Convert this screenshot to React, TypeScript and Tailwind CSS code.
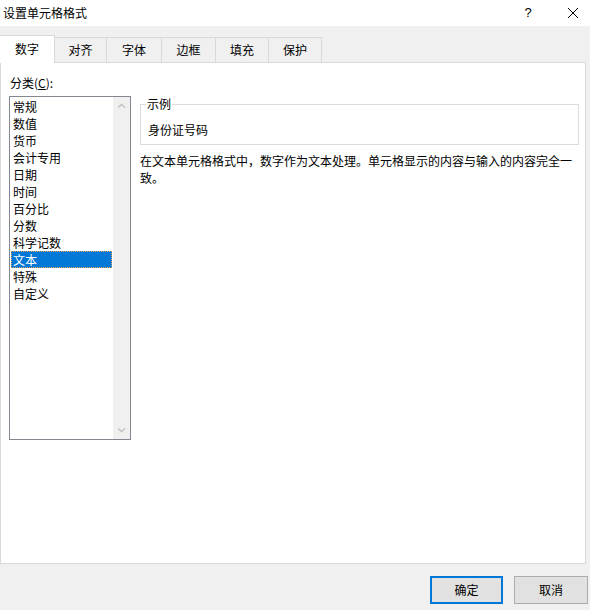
import { ReactNode } from 'react';

// Excel 的「设置单元格格式」对话框 —— 数字 选项卡

const tabs = [
  { label: '数字', width: 'w-[55px]' },
  { label: '对齐', width: 'w-[52px]' },
  { label: '字体', width: 'w-[55px]' },
  { label: '边框', width: 'w-[54px]' },
  { label: '填充', width: 'w-[53px]' },
  { label: '保护', width: 'w-[53px]' },
];

const categories = [
  '常规',
  '数值',
  '货币',
  '会计专用',
  '日期',
  '时间',
  '百分比',
  '分数',
  '科学记数',
  '文本',
  '特殊',
  '自定义',
];

const selected = '文本';

function Chevron({ down = false }: { down?: boolean }) {
  return (
    <svg width="9" height="6" viewBox="0 0 9 6" className="block">
      <path
        d={down ? 'M1 1.5 L4.5 4.5 L8 1.5' : 'M1 4.5 L4.5 1.5 L8 4.5'}
        fill="none"
        stroke="#c2c2c2"
        strokeWidth="1.6"
      />
    </svg>
  );
}

function DialogButton({ children, primary = false }: { children: ReactNode; primary?: boolean }) {
  return (
    <button
      className={
        primary
          ? 'w-[73px] h-[28px] bg-[#e1e1e1] border-2 border-[#0078d7] text-[12px] text-black'
          : 'w-[74px] h-[28px] bg-[#e1e1e1] border border-[#adadad] text-[12px] text-black'
      }
    >
      {children}
    </button>
  );
}

export default function App() {
  return (
    <div className="w-[590px] h-[610px] bg-[#f0f0f0] flex flex-col font-['Noto_Sans_CJK_SC','Microsoft_YaHei',sans-serif] text-[12px] text-black overflow-hidden">
      {/* Title bar */}
      <div className="h-[26px] bg-white flex items-center justify-between pl-[3px]">
        <span className="leading-4">设置单元格格式</span>
        <div className="flex items-center pr-[11px]">
          <span className="w-[20px] text-center font-['Liberation_Sans',sans-serif] text-[13px] leading-4">?</span>
          <svg width="12" height="12" viewBox="0 0 12 12" className="ml-[29px]">
            <path d="M1 1 L11 11 M11 1 L1 11" stroke="#000" strokeWidth="1" fill="none" />
          </svg>
        </div>
      </div>

      {/* Tabs */}
      <div className="flex items-end mt-[9px] relative z-10">
        {tabs.map((t, i) =>
          i === 0 ? (
            <div
              key={t.label}
              className={`${t.width} h-[28px] -mb-px bg-white border-t border-r border-[#d9d9d9] flex items-center justify-center pb-[1px]`}
            >
              {t.label}
            </div>
          ) : (
            <div
              key={t.label}
              className={`${t.width} h-[25px] border-t border-r border-[#d9d9d9] flex items-center justify-center`}
            >
              {t.label}
            </div>
          )
        )}
      </div>

      {/* Panel */}
      <div className="w-[586px] h-[502px] bg-white border border-[#d9d9d9] flex pl-[8px] pt-[12px]">
        {/* Category list */}
        <div className="flex flex-col w-[122px]">
          <div className="leading-4 pl-px">
            分类(<span className="underline">C</span>):
          </div>
          <div className="mt-[5px] h-[344px] border border-[#828790] flex">
            <div className="flex-1 p-px pt-[1px]">
              {categories.map((c) =>
                c === selected ? (
                  <div
                    key={c}
                    className="h-[17px] leading-[17px] pl-[1px] bg-[#0078d7] text-white border border-dotted border-[#e9a25a] flex items-center"
                  >
                    {c}
                  </div>
                ) : (
                  <div key={c} className="h-[17px] leading-[17px] pl-[2px]">
                    {c}
                  </div>
                )
              )}
            </div>
            <div className="w-[17px] bg-[#f0f0f0] flex flex-col justify-between items-center py-[6px]">
              <Chevron />
              <Chevron down />
            </div>
          </div>
        </div>

        {/* Sample + description */}
        <div className="ml-[9px] w-[439px] pt-[21px]">
          <fieldset className="border border-[#dcdcdc] pl-[5px] pb-[6px]">
            <legend className="px-px leading-4">示例</legend>
            <div className="mt-[10px] pl-[2px] leading-4">身份证号码</div>
          </fieldset>
          <p className="mt-[7px] leading-[17px]">
            在文本单元格格式中，数字作为文本处理。单元格显示的内容与输入的内容完全一致。
          </p>
        </div>
      </div>

      {/* Buttons */}
      <div className="flex justify-end gap-[11px] pt-[12px] pr-[2px]">
        <DialogButton primary>确定</DialogButton>
        <DialogButton>取消</DialogButton>
      </div>
    </div>
  );
}
